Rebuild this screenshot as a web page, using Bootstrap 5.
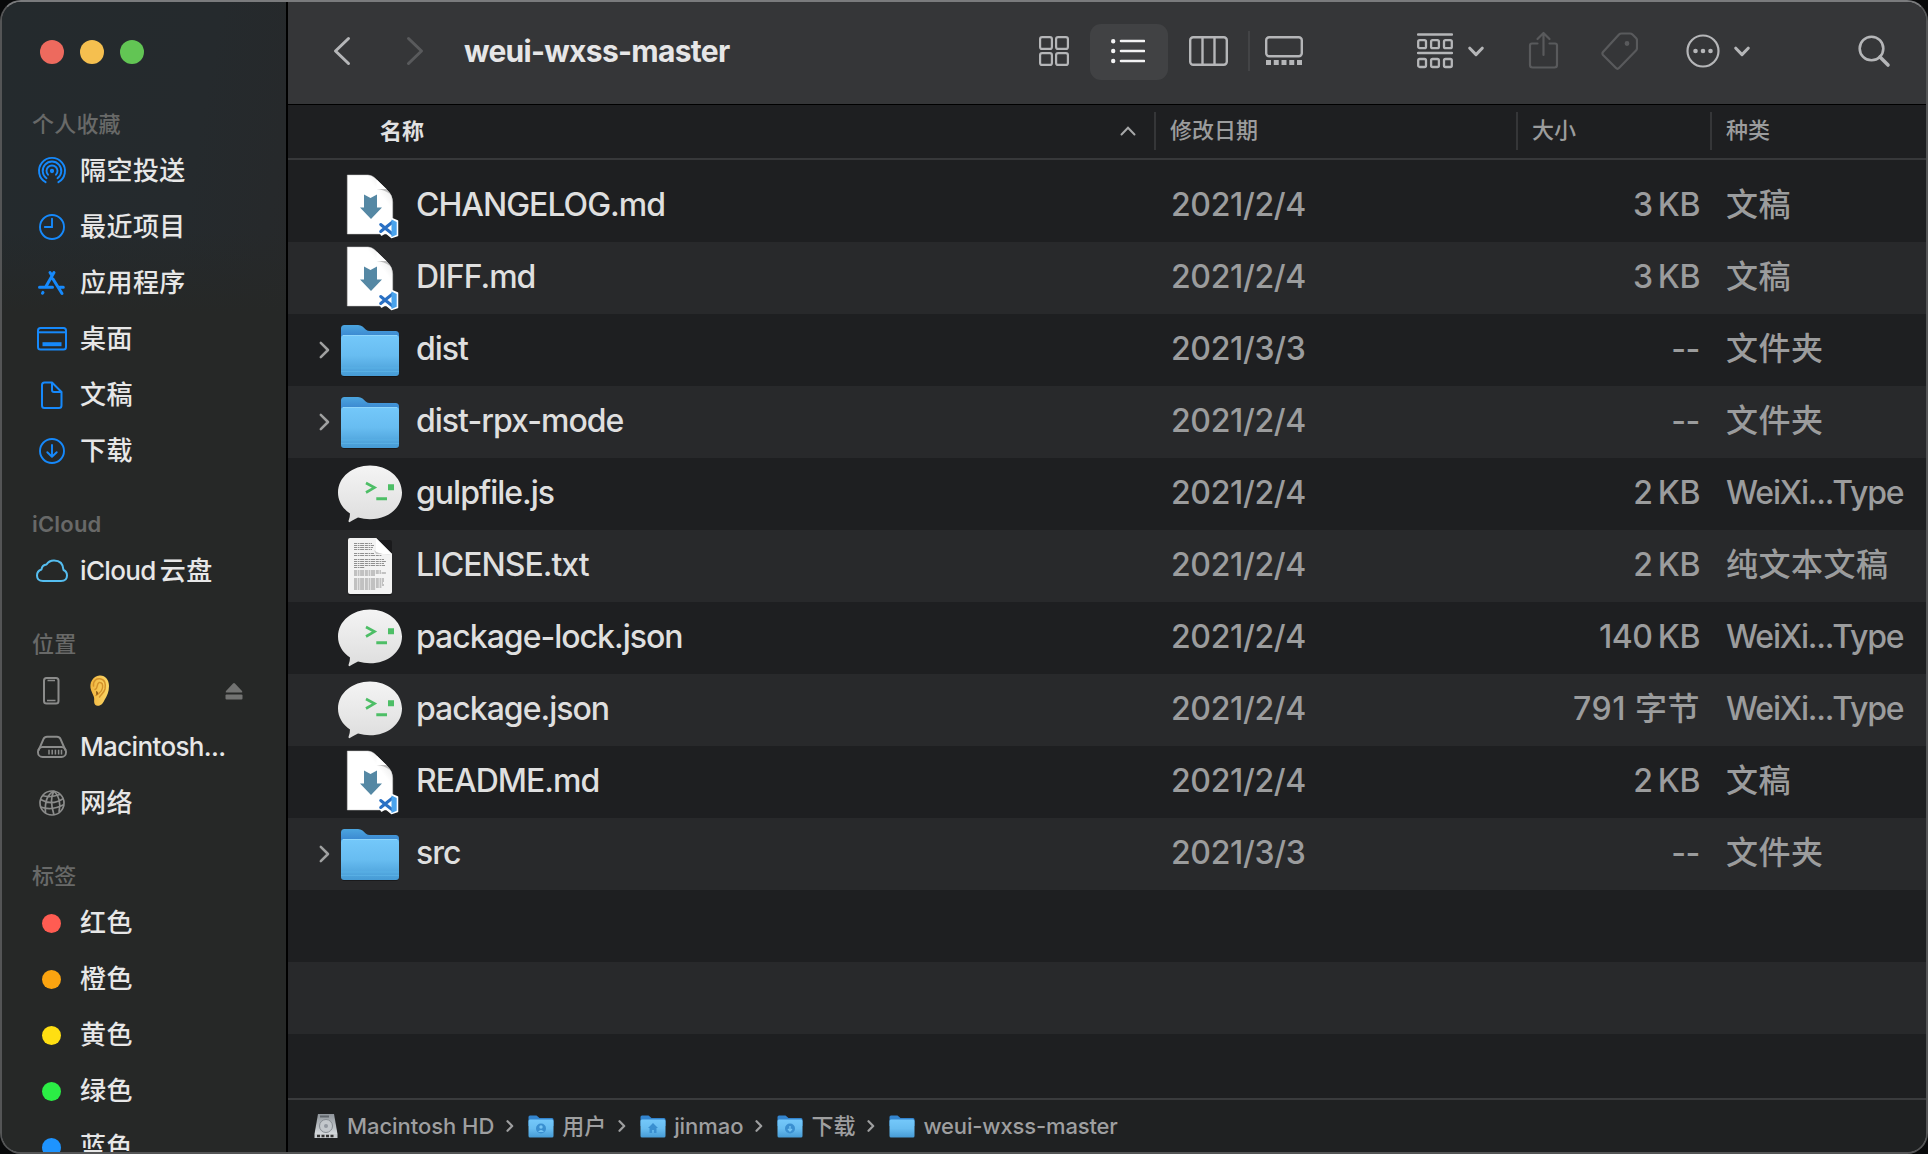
<!DOCTYPE html>
<html lang="zh-CN">
<head>
<meta charset="utf-8">
<meta name="viewport" content="width=device-width, initial-scale=1">
<title>weui-wxss-master</title>
<link href="https://cdn.jsdelivr.net/npm/bootstrap@5.3.0/dist/css/bootstrap.min.css" rel="stylesheet">
<style>
body{background:#08090a;font-family:Inter,"Noto Sans CJK SC",sans-serif;color:#dfdfdf;overflow:hidden;width:1928px;height:1154px}
svg{display:block;flex:none}
.win{width:1928px;height:1154px;border:2px solid #545556;border-top-color:#7a7b7d;border-radius:21px;background:#1e1f21}
.side{width:286px;border-right:2px solid #000;background:linear-gradient(180deg,rgba(38,40,39,0) 0,rgba(38,40,39,0) 230px,#262827 310px),linear-gradient(100deg,#242a2d 0,#252a2d 45%,#272829 80%);flex:none;font-weight:500}
.dots{padding:38px 0 0 38px;gap:16px;height:102px}
.dot{width:24px;height:24px;border-radius:50%}
.grp{font-size:22px;line-height:32px;color:#686968;padding-left:30px;letter-spacing:.2px;height:32px}
.grp.lat{font-weight:600}
.it{height:56px;padding-left:34px;font-size:26px;letter-spacing:.45px;color:#e7e7e7;white-space:nowrap}
.it svg{margin-right:12px}
.it span{line-height:40px}
.it .tight{letter-spacing:-.65px}
.blue{color:#1689fb}.cyan{color:#55bef0}.gray{color:#8b8c8b}
.tag{width:19px;height:19px;border-radius:50%;margin:0 19px 0 6px;flex:none}
.bar{height:103px;background:#353638;border-bottom:1px solid #000;color:#b5b6b8;padding-bottom:4px}
.bar .off{color:#595a5c}
.ttl{font-size:30px;font-weight:700;color:#e6e6e7;line-height:40px;width:575px;margin-left:40px;letter-spacing:-.7px}
.sel{width:78px;height:56px;border-radius:11px;background:#414244;color:#f3f3f4;margin:2px 21px 0;padding-right:2px}
.vr1{width:2px;height:40px;background:#434446;margin:0 15px 0 20px;flex:none}
.head{height:55px;border-bottom:2px solid #37383a;font-size:22px;color:#9b9c9d;font-weight:500;padding-bottom:1px}
.head>div{height:38px;line-height:37px;border-left:2px solid #353638;padding-left:14px}
.head>.c-name{border:0;padding-left:92px;color:#e1e1e2;font-weight:700;padding-right:18px;line-height:36px;padding-bottom:1px}
.c-name{width:866px;flex:none}.c-date{width:362px;flex:none}.c-size{width:194px;flex:none}.c-kind{width:214px;flex:none}
.head .srt{margin-top:1px}
.files{padding-top:10px;height:938px}
.files>div{height:72px}
.files>div:nth-child(even){background:#28292b}
.r{font-size:32px;color:#9b9c9d;white-space:nowrap;font-weight:450}
.r span{line-height:44px;padding-bottom:2px}
.r .c-name{color:#dfdfdf;letter-spacing:-1px}
.r .c-name span{padding-left:14px}
.r .c-date{padding-left:17px;letter-spacing:-.35px}
.r .c-size{text-align:right;padding-right:10px;letter-spacing:-.4px}
.r .c-size.wide{letter-spacing:.5px}
.r .c-kind{padding-left:16px;letter-spacing:.5px}
.r .c-kind.tight{letter-spacing:-1.2px}
.tw{width:50px;padding-left:31px;flex:none;color:#a0a1a1}
.tw svg{margin-top:-1px}
.files>div.tail{height:64px}
.path{height:54px;border-top:2px solid #3a3b3d;background:#1f2122;font-size:22px;color:#9e9fa0;padding-left:26px;line-height:32px;white-space:nowrap;padding-bottom:1px;font-weight:450;letter-spacing:-.05px}
.path .sep{margin:0 14px 0 12px}
.path span{margin-left:9px}
.path .sep+svg+span{margin-left:8px}
.path span:last-child{letter-spacing:-.15px}
</style>
<script src="https://cdn.jsdelivr.net/npm/bootstrap@5.3.0/dist/js/bootstrap.bundle.min.js"></script>
</head>
<body>
<svg class="position-absolute" width="0" height="0" aria-hidden="true">
<defs>
<linearGradient id="gf" x1="0" y1="0" x2="0" y2="1"><stop offset="0" stop-color="#74c8fa"/><stop offset=".5" stop-color="#68bdf1"/><stop offset="1" stop-color="#469bd5"/></linearGradient>
<linearGradient id="gb" x1="0" y1="0" x2="0" y2="1"><stop offset="0" stop-color="#4ca5df"/><stop offset="1" stop-color="#2f74c6"/></linearGradient>
<linearGradient id="gc" x1="0" y1="0" x2="0" y2="1"><stop offset="0" stop-color="#f4f4f4"/><stop offset="1" stop-color="#dedede"/></linearGradient>
<linearGradient id="gp" x1="1" y1="0" x2=".4" y2=".6"><stop offset="0" stop-color="#d9d9d9"/><stop offset=".5" stop-color="#fff"/></linearGradient>
<linearGradient id="gk" x1="0" y1="1" x2="1" y2="0"><stop offset=".45" stop-color="#fff"/><stop offset="1" stop-color="#c4c4c4"/></linearGradient>
<linearGradient id="ge" x1="0" y1="0" x2="1" y2="0"><stop offset="0" stop-color="#f0b53f"/><stop offset="1" stop-color="#fbd766"/></linearGradient>
<linearGradient id="gh" x1="0" y1="0" x2="0" y2="1"><stop offset="0" stop-color="#8f959b"/><stop offset="1" stop-color="#d5d9dc"/></linearGradient>
</defs>
<symbol id="md" viewBox="0 0 64 72">
<path d="M9.300 5H30Q34 5 37.500 8.500L49 20Q54.700 25 54.700 32V64H9.300Z" fill="url(#gp)" stroke="#c9c9c9" stroke-width=".5"/>
<path d="M38.500 9.500V19H48.500Z" fill="#fff"/><path d="M38.500 19H48.500L52 24Q46 19.500 38.500 19Z" fill="#bdbdbd"/>
<path d="M26 24.500L32.500 28L39 24.500V37.500H44L33 49L22 37.500H26Z" fill="#5588a4"/>
<g transform="translate(-.5 -1)"><path d="M54 49.500L60 52V66.500L54 68.500L48 63.500L44 66L42 62.500L44.500 59L42 55.500L44.500 52.500L48 55Z" fill="#fff" stroke="#fff" stroke-width="1.500" stroke-linejoin="round"/>
<path d="M43.200 55.500L55 65M43.200 62.500L55 53" stroke="#2a70c4" stroke-width="3" stroke-linecap="round"/>
<path d="M54 50.500L59.200 53V65.800L54 68Z" fill="#4aa3ec"/></g>
</symbol>
<symbol id="fd" viewBox="0 0 64 72">
<rect x="3.500" y="20" width="57.200" height="43" rx="3" fill="#0b0c0d" opacity=".5"/>
<path d="M3 14.500Q3 11 6.500 11H20Q22.500 11 24.500 12.600L28 15.800Q29.500 17 32 17H57.500Q61 17 61 20.500V30H3Z" fill="url(#gb)"/>
<path d="M3 24.300Q3 21 6 21H58Q61 21 61 24.300V59Q61 62 58 62H6Q3 62 3 59Z" fill="url(#gf)"/>
<path d="M5 21.500H59" stroke="#8ed6fc" stroke-width="1"/><path d="M3 54H61M3 57.500H61" stroke="#5cb2e6" stroke-width=".8"/>
</symbol>
<symbol id="wx" viewBox="0 0 64 72">
<path d="M32 7.500C49.500 7.500 64 19 64 34.500C64 50 49.500 61.300 32 61.300Q26 61.300 20 59.500Q16 61.500 11.800 64Q10.500 64.500 10.500 63Q12 59.500 12 55.500C4.500 50.500 0 43 0 34.500C0 19 14.500 7.500 32 7.500Z" fill="url(#gc)"/>
<path d="M28 25L36.500 29.600L28 34.500" fill="none" stroke="#4dbe66" stroke-width="2.600"/><path d="M38.300 39.200H49V42.200H38.300ZM50 26.200H56V32.200H50Z" fill="#4dbe66"/>
</symbol>
<symbol id="tx" viewBox="0 0 64 72">
<rect x="10" y="10" width="44" height="55.500" rx="2" fill="#000" opacity=".35"/>
<path d="M12 8H38L54 24V62Q54 64 52 64H12Q10 64 10 62V10Q10 8 12 8Z" fill="#f3f3f3"/>
<path d="M16 13.500H34M16 15.500H36M16 17.500H35M16 19.500H34M16 23.500H36M16 25.500H44M16 29.500H46M16 31.500H48M16 33.500H46M16 35.500H47M16 37.500H27M16 41H43M16 43H48M16 45H37M16 49H46M16 51H46M16 53H45M16 55H46M16 57H44M16 59H38" stroke="#8f8f8f" stroke-width="1.100" stroke-dasharray="3 .7 1.800 .6 4 .8"/>
<path d="M38 8V24H54Z" fill="url(#gk)"/><path d="M36 20Q40 25 54 24L38 24Z" fill="#c9c9c9"/>
</symbol>
<symbol id="ch" viewBox="0 0 11 18"><path d="M1.800 1.800L9 9L1.800 16.200" fill="none" stroke="currentColor" stroke-width="2.500" stroke-linecap="round" stroke-linejoin="round"/></symbol>
<symbol id="dn" viewBox="0 0 16 11"><path d="M1.800 2.200L8 8.600L14.200 2.200" fill="none" stroke="currentColor" stroke-width="3" stroke-linecap="round" stroke-linejoin="round"/></symbol>
<symbol id="sp" viewBox="0 0 8 12"><path d="M1.500 1.200L6.200 6L1.500 10.800" fill="none" stroke="currentColor" stroke-width="2.200" stroke-linecap="round" stroke-linejoin="round"/></symbol>
<symbol id="sf" viewBox="0 0 26 24"><path d="M.5 3Q.5 1.500 2 1.500H8.500L11.500 4H24Q25.500 4 25.500 5.500V12H.5Z" fill="#3385cf"/><rect x=".5" y="5.500" width="25" height="18" rx="1.500" fill="url(#gf)"/></symbol>
</svg>

<div class="win d-flex overflow-hidden">
<aside class="side overflow-hidden">
  <div class="dots d-flex"><div class="dot" style="background:#ed6a5e"></div><div class="dot" style="background:#f5bf4f"></div><div class="dot" style="background:#62c554"></div></div>
  <div class="grp" style="margin-top:4px">个人收藏</div>
  <div style="height:3px"></div>
  <div class="it d-flex align-items-center"><svg class="blue" width="32" height="32" fill="none" stroke="currentColor" stroke-width="1.900" stroke-linecap="round"><path d="M9.600 27.200A13 13 0 1 1 22.400 27.200"/><path d="M10.500 23.300A9.300 9.300 0 1 1 21.500 23.300"/><path d="M12 19.700A5.500 5.500 0 1 1 20 19.700"/><circle cx="16" cy="16" r="1.200" fill="currentColor"/></svg><span>隔空投送</span></div>
  <div class="it d-flex align-items-center"><svg class="blue" width="32" height="32" fill="none" stroke="currentColor" stroke-width="1.900" stroke-linecap="round"><circle cx="16" cy="16" r="12"/><path d="M16 7.800V16H8.800"/></svg><span>最近项目</span></div>
  <div class="it d-flex align-items-center"><svg class="blue" width="32" height="32" fill="none" stroke="currentColor" stroke-width="3" stroke-linecap="round"><path d="M18 5.500L9.800 19.700M14 5.500L16 8.600M17 12L26 26.500M3.500 20.300H16.500M23.500 20.300H27.300M6.500 26.200L7 25.400"/></svg><span>应用程序</span></div>
  <div class="it d-flex align-items-center"><svg class="blue" width="32" height="32" fill="none" stroke="currentColor" stroke-width="2"><rect x="2" y="5" width="28" height="21.500" rx="2.500"/><path d="M2 9.300H30"/><path d="M6.500 21.200H25.500" stroke-width="4"/></svg><span>桌面</span></div>
  <div class="it d-flex align-items-center"><svg class="blue" width="32" height="32" fill="none" stroke="currentColor" stroke-width="2" stroke-linejoin="round"><path d="M8.500 3.500H16L25.500 13V26.500Q25.500 29 23 29H8.500Q6 29 6 26.500V6Q6 3.500 8.500 3.500Z"/><path d="M16 3.500V11Q16 13 18 13H25.500"/></svg><span>文稿</span></div>
  <div class="it d-flex align-items-center"><svg class="blue" width="32" height="32" fill="none" stroke="currentColor" stroke-width="1.900" stroke-linecap="round" stroke-linejoin="round"><circle cx="16" cy="16" r="12"/><path d="M16 10V21.500M11.300 17.200L16 21.800L20.700 17.200"/></svg><span>下载</span></div>
  <div class="grp lat" style="margin-top:29px">iCloud</div>
  <div style="height:3px"></div>
  <div class="it d-flex align-items-center"><svg class="cyan" width="32" height="32" fill="none" stroke="currentColor" stroke-width="2" stroke-linejoin="round"><path d="M7 26Q1 26 1 20.500Q1 16 5.500 14.500Q6 10 10.500 9.500Q13 5.500 18 5.500Q27 5.500 27.500 15Q31 16.500 31 20.500Q31 26 25 26Z"/></svg><span class="tight">iCloud</span><span style="margin-left:4px">云盘</span></div>
  <div class="grp" style="margin-top:29px">位置</div>
  <div style="height:3px"></div>
  <div class="it d-flex align-items-center"><svg class="gray" width="32" height="32" fill="none" stroke="currentColor" stroke-width="2"><rect x="8" y="3" width="14.500" height="25.500" rx="2.500"/><path d="M11.500 5.500H19M11 25.500H19.500" stroke-width="1.600"/></svg>
    <svg width="36" height="34" viewBox="0 0 36 34"><path d="M19.500 1.500C25 1 29 5.500 29 12C29 18 27 22 24.500 26C23 29.500 21 32 17.500 31.800C14 31.500 14 28 14.200 25C14.300 22.500 12.500 20 11.200 16.500C8.500 9 13 2 19.500 1.500Z" fill="url(#ge)"/><path d="M13.500 12C13 6 17 4.500 20 4.800C25 5.300 26 10 25 15C24 19 21 20.500 19.500 23M15 15.500C18.500 14 16 10.500 19 8.500C22.500 8 23 11 22.500 14C22 18 19.500 18.500 16 21.500" fill="none" stroke="#d3922b" stroke-width="1.500" stroke-linecap="round"/><path d="M16.300 17.500Q18 19 16.500 20.500" stroke="#7a4a10" stroke-width="1.400" fill="none"/></svg>
    <svg width="18" height="18" class="ms-auto" style="margin-right:43px" fill="#727372"><path d="M8 1.500Q9 .5 10 1.500L17 9Q18 10.500 16.500 10.500H1.500Q0 10.500 1 9Z"/><rect x=".5" y="12.500" width="17" height="5" rx="1"/></svg></div>
  <div class="it d-flex align-items-center"><svg class="gray" width="32" height="32" fill="none" stroke="currentColor" stroke-width="1.900" stroke-linejoin="round"><path d="M2.500 19.500L7.500 8Q8.500 5.700 11 5.700H21Q23.500 5.700 24.500 8L29.500 19.500"/><rect x="2" y="16" width="28" height="10" rx="4.500"/><path d="M13 18.800V23.600M16.200 18.800V23.600M19.400 18.800V23.600M22.600 18.800V23.600M25.500 18.800V23.600" stroke-width="1.500"/></svg><span class="tight">Macintosh...</span></div>
  <div class="it d-flex align-items-center"><svg class="gray" width="32" height="32" fill="none" stroke="currentColor" stroke-width="1.700"><circle cx="16" cy="16" r="12"/><path d="M18 4Q8 9 9.500 26M18 4Q13 12 18 28M18 4Q26 12 23 25M4.500 12.500Q16 19 27.500 11.500M6 8.500Q14 11 24 7.500M4.500 20Q16 24 28 17.500"/></svg><span>网络</span></div>
  <div class="grp" style="margin-top:29px">标签</div>
  <div style="height:3px"></div>
  <div class="it d-flex align-items-center"><div class="tag" style="background:#ff5c52"></div><span>红色</span></div>
  <div class="it d-flex align-items-center"><div class="tag" style="background:#fba410"></div><span>橙色</span></div>
  <div class="it d-flex align-items-center"><div class="tag" style="background:#ffdf12"></div><span>黄色</span></div>
  <div class="it d-flex align-items-center"><div class="tag" style="background:#2bee45"></div><span>绿色</span></div>
  <div class="it d-flex align-items-center"><div class="tag" style="background:#1e94ff"></div><span>蓝色</span></div>
</aside>

<main class="flex-grow-1 d-flex flex-column">
  <div class="bar d-flex align-items-center">
    <svg style="margin-left:45px" width="18" height="30" fill="none" stroke="currentColor" stroke-width="3" stroke-linecap="round" stroke-linejoin="round"><path d="M15.500 2.500L2.500 15L15.500 27.500"/></svg>
    <svg class="off" style="margin-left:55px" width="18" height="30" fill="none" stroke="currentColor" stroke-width="3" stroke-linecap="round" stroke-linejoin="round"><path d="M2.500 2.500L15.500 15L2.500 27.500"/></svg>
    <div class="ttl">weui-wxss-master</div>
    <svg width="30" height="30" fill="none" stroke="currentColor" stroke-width="2.200"><rect x="1.100" y="1.100" width="11.800" height="11.800" rx="2"/><rect x="17.100" y="1.100" width="11.800" height="11.800" rx="2"/><rect x="1.100" y="17.100" width="11.800" height="11.800" rx="2"/><rect x="17.100" y="17.100" width="11.800" height="11.800" rx="2"/></svg>
    <div class="sel d-flex align-items-center justify-content-center"><svg width="34" height="26" stroke="currentColor" stroke-width="2.600" stroke-linecap="round"><path d="M10 2H33M10 12H33M10 22H33"/><path d="M2.200 2.200h.01M2.200 12h.01M2.200 22h.01" stroke-width="4.400"/></svg></div>
    <svg width="39" height="30" fill="none" stroke="currentColor" stroke-width="2.400"><rect x="1.200" y="1.200" width="36.600" height="27.600" rx="3"/><path d="M13.500 1V29M25.500 1V29"/></svg>
    <div class="vr1"></div>
    <svg width="38" height="30" fill="none" stroke="currentColor" stroke-width="2.400"><rect x="1.200" y="1.200" width="35.600" height="19" rx="3"/><path d="M1 26.500H37" stroke-width="5" stroke-dasharray="5 2.750"/></svg>
    <svg style="margin-left:114px" width="36" height="36" fill="none" stroke="currentColor" stroke-width="2.300"><path d="M1 1.500H35M1 20H35" stroke-linecap="round"/><rect x="1.200" y="7.200" width="7.800" height="8" rx="1.500"/><rect x="14.100" y="7.200" width="7.800" height="8" rx="1.500"/><rect x="27" y="7.200" width="7.800" height="8" rx="1.500"/><rect x="1.200" y="26" width="7.800" height="8" rx="1.500"/><rect x="14.100" y="26" width="7.800" height="8" rx="1.500"/><rect x="27" y="26" width="7.800" height="8" rx="1.500"/></svg>
    <svg style="margin-left:15px" width="16" height="11"><use href="#dn"/></svg>
    <svg class="off" style="margin-left:44px" width="31" height="40" fill="none" stroke="currentColor" stroke-width="2.200" stroke-linecap="round" stroke-linejoin="round"><path d="M9.500 12.500H4Q2 12.500 2 14.500V34Q2 36.500 4.500 36.500H26.500Q29 36.500 29 34V14.500Q29 12.500 27 12.500H21.500M15.500 24V2M9.500 8L15.500 2L21.500 8"/></svg>
    <svg class="off" style="margin-left:42px" width="37" height="38" fill="none" stroke="currentColor" stroke-width="2.200" stroke-linejoin="round"><path d="M20.500 1.500H29Q30.500 1.500 31.500 2.500L35 6Q36 7 36 8.500V16Q36 17.500 35 18.500L18 36Q16.500 37.500 15 36L2 23Q.8 21.500 2 20L18 2.500Q19 1.500 20.500 1.500Z"/><circle cx="26" cy="11.500" r="1.300" fill="currentColor"/></svg>
    <svg style="margin-left:48px" width="34" height="34" fill="none" stroke="currentColor" stroke-width="2.200"><circle cx="17" cy="17" r="15.500"/><path d="M9.500 17h.01M17 17h.01M24.500 17h.01" stroke-width="4.600" stroke-linecap="round"/></svg>
    <svg style="margin-left:14px" width="16" height="11"><use href="#dn"/></svg>
    <svg style="margin-left:108px" width="33" height="33" fill="none" stroke="currentColor" stroke-width="2.600" stroke-linecap="round"><circle cx="13.500" cy="13.500" r="11.800"/><path d="M22 22L30 30" stroke-width="3.600"/></svg>
  </div>
  <div class="head d-flex align-items-center">
    <div class="c-name d-flex justify-content-between align-items-center">名称<svg class="srt" width="16" height="10" fill="none" stroke="#a7a8a9" stroke-width="2" stroke-linecap="round"><path d="M1.500 8.500L8 1.800L14.500 8.500"/></svg></div>
    <div class="c-date">修改日期</div><div class="c-size">大小</div><div class="c-kind">种类</div>
  </div>
  <div class="files overflow-hidden">
    <div class="r d-flex align-items-center"><div class="c-name d-flex align-items-center"><div class="tw"></div><svg width="64" height="72"><use href="#md"/></svg><span>CHANGELOG.md</span></div><span class="c-date">2021/2/4</span><span class="c-size">3&#8201;KB</span><span class="c-kind">文稿</span></div>
    <div class="r d-flex align-items-center"><div class="c-name d-flex align-items-center"><div class="tw"></div><svg width="64" height="72"><use href="#md"/></svg><span>DIFF.md</span></div><span class="c-date">2021/2/4</span><span class="c-size">3&#8201;KB</span><span class="c-kind">文稿</span></div>
    <div class="r d-flex align-items-center"><div class="c-name d-flex align-items-center"><div class="tw"><svg width="11" height="18"><use href="#ch"/></svg></div><svg width="64" height="72"><use href="#fd"/></svg><span>dist</span></div><span class="c-date">2021/3/3</span><span class="c-size">--</span><span class="c-kind">文件夹</span></div>
    <div class="r d-flex align-items-center"><div class="c-name d-flex align-items-center"><div class="tw"><svg width="11" height="18"><use href="#ch"/></svg></div><svg width="64" height="72"><use href="#fd"/></svg><span>dist-rpx-mode</span></div><span class="c-date">2021/2/4</span><span class="c-size">--</span><span class="c-kind">文件夹</span></div>
    <div class="r d-flex align-items-center"><div class="c-name d-flex align-items-center"><div class="tw"></div><svg width="64" height="72"><use href="#wx"/></svg><span>gulpfile.js</span></div><span class="c-date">2021/2/4</span><span class="c-size">2&#8201;KB</span><span class="c-kind tight">WeiXi...Type</span></div>
    <div class="r d-flex align-items-center"><div class="c-name d-flex align-items-center"><div class="tw"></div><svg width="64" height="72"><use href="#tx"/></svg><span>LICENSE.txt</span></div><span class="c-date">2021/2/4</span><span class="c-size">2&#8201;KB</span><span class="c-kind">纯文本文稿</span></div>
    <div class="r d-flex align-items-center"><div class="c-name d-flex align-items-center"><div class="tw"></div><svg width="64" height="72"><use href="#wx"/></svg><span>package-lock.json</span></div><span class="c-date">2021/2/4</span><span class="c-size">140&#8201;KB</span><span class="c-kind tight">WeiXi...Type</span></div>
    <div class="r d-flex align-items-center"><div class="c-name d-flex align-items-center"><div class="tw"></div><svg width="64" height="72"><use href="#wx"/></svg><span>package.json</span></div><span class="c-date">2021/2/4</span><span class="c-size wide">791 字节</span><span class="c-kind tight">WeiXi...Type</span></div>
    <div class="r d-flex align-items-center"><div class="c-name d-flex align-items-center"><div class="tw"></div><svg width="64" height="72"><use href="#md"/></svg><span>README.md</span></div><span class="c-date">2021/2/4</span><span class="c-size">2&#8201;KB</span><span class="c-kind">文稿</span></div>
    <div class="r d-flex align-items-center"><div class="c-name d-flex align-items-center"><div class="tw"><svg width="11" height="18"><use href="#ch"/></svg></div><svg width="64" height="72"><use href="#fd"/></svg><span>src</span></div><span class="c-date">2021/3/3</span><span class="c-size">--</span><span class="c-kind">文件夹</span></div>
    <div></div><div></div><div class="tail"></div>
  </div>
  <div class="path d-flex align-items-center">
    <svg width="24" height="26"><path d="M4 1H20L23.500 21H.5Z" fill="url(#gh)"/><path d="M.5 21H23.500V25H.5Z" fill="#c8cccf"/><path d="M3 23H21" stroke="#333" stroke-width="2.500" stroke-dasharray="3 1.500"/><circle cx="12" cy="13" r="6.500" fill="#c3c8cc" stroke="#858b91"/><circle cx="12" cy="13" r="2" fill="#9298a0"/><path d="M6 3.500H15" stroke="#5f656b" stroke-width="2"/></svg>
    <span>Macintosh HD</span><svg class="sep" width="8" height="12"><use href="#sp"/></svg>
    <svg width="26" height="24"><use href="#sf"/><circle cx="13" cy="14.500" r="5" fill="#3a8fd0"/><circle cx="13" cy="13" r="1.700" fill="#74c5f5"/><path d="M10 18Q13 14 16 18" fill="#74c5f5"/></svg><span>用户</span><svg class="sep" width="8" height="12"><use href="#sp"/></svg>
    <svg width="26" height="24"><use href="#sf"/><path d="M13 9L18 14H16.500V19H14V16H12V19H9.500V14H8Z" fill="#3a8fd0"/></svg><span>jinmao</span><svg class="sep" width="8" height="12"><use href="#sp"/></svg>
    <svg width="26" height="24"><use href="#sf"/><circle cx="13" cy="14.500" r="5" fill="#3a8fd0"/><path d="M13 12V17M11 15L13 17L15 15" fill="none" stroke="#74c5f5" stroke-width="1.300"/></svg><span>下载</span><svg class="sep" width="8" height="12"><use href="#sp"/></svg>
    <svg width="26" height="24"><use href="#sf"/></svg><span>weui-wxss-master</span>
  </div>
</main>
</div>
</body>
</html>
